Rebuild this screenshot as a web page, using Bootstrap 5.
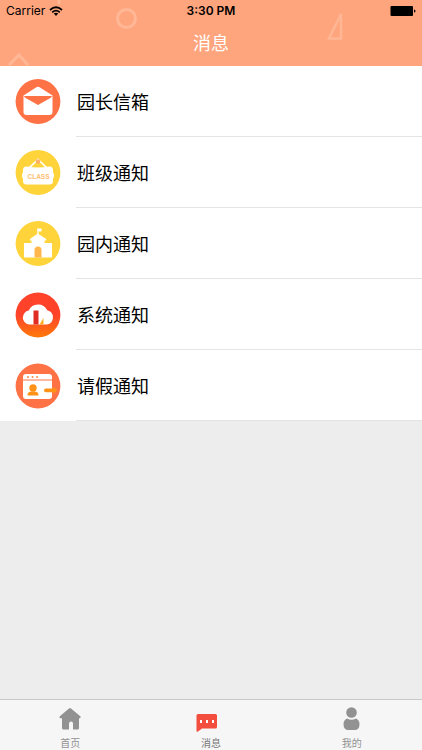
<!DOCTYPE html>
<html lang="zh-CN">
<head>
<meta charset="utf-8">
<meta name="viewport" content="width=device-width, initial-scale=1">
<title>消息</title>
<link href="https://cdn.jsdelivr.net/npm/bootstrap@5.3.0/dist/css/bootstrap.min.css" rel="stylesheet">
<style>
body { font-family: Inter, "Noto Sans CJK SC", sans-serif; background: #ededed; color: #000; }
.top-area { background: #ffa57e; height: 66px; }
.status-line { height: 22px; font-size: 12px; line-height: 22px; padding: 0 6px; }
.status-line > * { flex: 1 1 0; }
.clock { font-weight: 600; }
.decor { inset: 0; }
.page-title { font-size: 18px; line-height: 44px; font-weight: 400; }
.msg-row { padding-left: 15px; height: 71px; color: #000; }
.msg-text { margin-left: 15px; padding: 2px 0 0 1px; height: 71px; line-height: 70px; font-size: 18px; border-bottom: 1px solid #e4e4e4; }
.tab-strip { background: #f6f6f6; border-top: 1px solid #c9c9c9; height: 51px; }
.tab-link { color: #929292; font-size: 10px; line-height: 14px; padding-top: 6px; }
.tab-link.current { color: #777; }
.tab-link svg { margin-bottom: 2px; }
</style>
<script src="https://cdn.jsdelivr.net/npm/bootstrap@5.3.0/dist/js/bootstrap.bundle.min.js"></script>
</head>
<body class="d-flex flex-column min-vh-100">
<header class="top-area position-relative overflow-hidden">
  <div class="decor position-absolute d-flex justify-content-between" aria-hidden="true">
    <svg width="150" height="66" fill="none" stroke="#ffb796" stroke-width="3"><circle cx="126.500" cy="18.500" r="9"/><path d="M9 65L19 55l9 10M59 0v4"/></svg>
    <svg width="100" height="66" fill="none" stroke="#ffb695" stroke-width="2.500"><path d="M19 14v24.500H7z"/></svg>
  </div>
  <div class="status-line d-flex position-relative">
    <div class="d-flex align-items-center gap-1"><span>Carrier</span>
      <svg width="14" height="11" viewBox="0 0 14 11" fill="none" stroke="#000" stroke-width="1.700" aria-label="Wi-Fi"><path d="M1 4Q7-1.500 13 4M3.200 6.400Q7 3 10.800 6.400"/><path d="M4.800 7.600Q7 5.900 9.200 7.600L7 10z" fill="#000" stroke="none"/></svg>
    </div>
    <div class="clock text-center">3:30 PM</div>
    <div class="d-flex justify-content-end align-items-center">
      <svg width="26" height="10" viewBox="0 0 26 10" aria-label="Battery"><rect x=".5" y="0" width="22.500" height="10" rx="1"/><path d="M24 3.500q1.500 0 1.500 1.500T24 6.500z"/></svg>
    </div>
  </div>
  <h1 class="page-title text-center text-white m-0 position-relative">消息</h1>
</header>

<main class="flex-grow-1">
  <nav class="bg-white" aria-label="消息分类">
    <a href="#" class="msg-row d-flex align-items-center text-decoration-none">
      <svg width="46" height="46" viewBox="0 0 46 46"><circle cx="23" cy="22.500" r="22.400" fill="#ff7245"/><path d="M8.500 16.500L21 8.500q2-1.300 4 0l12.500 8v16.500q0 3-3 3h-23q-3 0-3-3z" fill="#fff"/><path d="M9 17h28q-.5 1.500-2.500 2.500L23 26l-11.500-6.500Q9.500 18.500 9 17z" fill="#ff7245"/></svg>
      <span class="msg-text flex-grow-1">园长信箱</span>
    </a>
    <a href="#" class="msg-row d-flex align-items-center text-decoration-none">
      <svg width="46" height="46" viewBox="0 0 46 46"><circle cx="23" cy="22.500" r="22.400" fill="#ffd43b"/><path d="M14 18L23 9.500l9 8.500" fill="none" stroke="#fff" stroke-width="1.700"/><circle cx="23" cy="11.500" r="2.300" fill="#ffb066"/><path d="M11.500 16.500q11.500 2 23 0 3.500 0 3.500 3.500v2q2 3.500 0 7v2q0 3.500-3.500 3.500h-23Q8 34.500 8 31v-2q-2-3.500 0-7v-2q0-3.500 3.500-3.500z" fill="#fff"/><text x="23.500" y="28.500" text-anchor="middle" font-family="Liberation Sans, sans-serif" font-size="6.500" font-weight="700" fill="#ffbd70">CLASS</text></svg>
      <span class="msg-text flex-grow-1">班级通知</span>
    </a>
    <a href="#" class="msg-row d-flex align-items-center text-decoration-none">
      <svg width="46" height="46" viewBox="0 0 46 46"><circle cx="23" cy="22.500" r="22.400" fill="#ffd43b"/><path d="M22.200 7.500h4.300v3h-3V13l7.700 5v1.500h-1.700v2.500H37v14.500H9V22h7.500v-2.500H15V18l7.200-5z" fill="#fff"/><path d="M19.500 36.500V29q0-3.500 3.500-3.500t3.500 3.500v7.500z" fill="#ffb74d"/></svg>
      <span class="msg-text flex-grow-1">园内通知</span>
    </a>
    <a href="#" class="msg-row d-flex align-items-center text-decoration-none">
      <svg width="46" height="46" viewBox="0 0 46 46"><defs><linearGradient id="fire" x1="0" y1="0" x2="0" y2="1"><stop offset=".5" stop-color="#ff432b"/><stop offset="1" stop-color="#ff7908"/></linearGradient></defs><circle cx="23" cy="23" r="22.400" fill="url(#fire)"/><path d="M14.500 32.500a7 7 0 0 1-.8-13.900 10.200 10.200 0 0 1 18.500-.4 7.300 7.300 0 0 1-.2 14.300z" fill="#fff"/><path d="M18.500 18.500h5v14h-5z" fill="#e02c22"/><path d="M24.500 32.500l4-6.500v6.500z" fill="#ffad1f"/></svg>
      <span class="msg-text flex-grow-1">系统通知</span>
    </a>
    <a href="#" class="msg-row d-flex align-items-center text-decoration-none">
      <svg width="46" height="46" viewBox="0 0 46 46"><circle cx="23" cy="23" r="22.400" fill="#ff7245"/><path d="M11 11h23q3 0 3 3v2.500H8V14q0-3 3-3zM8 17.500h29V33q0 3-3 3H11q-3 0-3-3z" fill="#fff"/><g fill="#ff8a3c"><circle cx="13" cy="14" r="1"/><circle cx="17.500" cy="14" r="1"/><circle cx="22" cy="14" r="1"/></g><g fill="#ff9217"><circle cx="18" cy="25" r="3.700"/><path d="M12.500 32.500q0-4 4-4h3q4 0 4 4z"/><path d="M31 25.500h7.500v-1.800l4 3.600-4 3.600v-1.700H31q-2 0-2-1.800t2-1.900z"/></g></svg>
      <span class="msg-text flex-grow-1">请假通知</span>
    </a>
  </nav>
</main>

<nav class="tab-strip d-flex sticky-bottom" aria-label="主导航">
  <a href="#" class="tab-link col d-flex flex-column align-items-center text-decoration-none"><svg width="24" height="28" viewBox="0 0 24 28" fill="#929292"><path d="M11 2.500q1-.9 2 0l9.300 7.800q.6.600.3 1.300-.2.700-1 .7H21V22q0 1.500-1.500 1.500H15v-6q0-2-1.800-2-2.200 0-2.200 2v6H5.500Q4 23.500 4 22v-9.700H2.500q-.8 0-1-.7-.3-.7.300-1.300z"/></svg>首页</a>
  <a href="#" class="tab-link current col d-flex flex-column align-items-center text-decoration-none" aria-current="page"><svg width="30" height="28" viewBox="0 0 30 28"><path d="M2 8h17.500q1.500 0 1.500 1.500v11.500q0 1.500-1.500 1.500H6l-4 3q-1.500 1-1.500-1V9.500Q.5 8 2 8z" fill="#f24d3d"/><g fill="#fff"><rect x="4" y="14" width="2" height="3"/><rect x="10" y="14" width="2" height="3"/><rect x="16" y="14" width="2" height="3"/></g></svg>消息</a>
  <a href="#" class="tab-link col d-flex flex-column align-items-center text-decoration-none"><svg width="24" height="28" viewBox="0 0 24 28" fill="#929292"><circle cx="11.500" cy="6.500" r="5.300"/><path d="M7 12.500q4.500 2.500 9 0 3.500 1.500 3.500 5.500 0 6-5 6h-6q-5 0-5-6Q3.500 14 7 12.500z"/></svg>我的</a>
</nav>
</body>
</html>
